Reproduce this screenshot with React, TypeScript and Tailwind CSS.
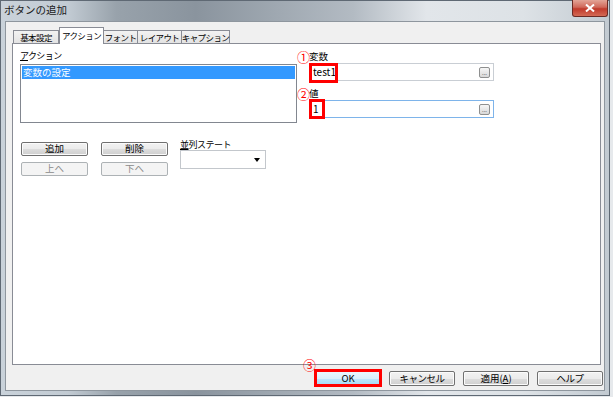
import React from 'react';

const btn =
  'flex items-center justify-center whitespace-nowrap rounded-[2px] border text-[9.5px] leading-none';
const btnNormal =
  btn +
  ' border-[#707070] bg-[linear-gradient(#f2f2f2_0%,#ebebeb_50%,#dddddd_51%,#cfcfcf_100%)] shadow-[inset_0_0_0_1px_#fbfbfb] text-black';
const btnDisabled =
  btn + ' border-[#adb2b5] bg-[#f4f4f4] text-[#8b8b8b]';

function BrowseButton() {
  return (
    <span className="flex h-[11px] w-[11px] items-end justify-center rounded-[2px] border border-[#8e8f8f] bg-[linear-gradient(#f6f6f6,#d8d8d8)] pb-[1px] text-[6px] leading-[6px] text-[#444]">
      ...
    </span>
  );
}

function Tab({ label, active, w }: { label: string; active?: boolean; w: number }) {
  return (
    <div
      className={
        'flex items-center justify-center whitespace-nowrap border-x border-t border-[#898c95] text-[8.5px] leading-none tracking-[-0.6px] ' +
        (active
          ? 'h-[17px] bg-white pb-[2px]'
          : 'mb-[1px] h-[13px] -ml-px bg-[linear-gradient(#f2f2f2,#e3e3e3)] first:ml-0')
      }
      style={{ width: w }}
    >
      {label}
    </div>
  );
}

export default function App() {
  return (
    <div className="h-[397px] w-[613px] overflow-hidden bg-[#e6e9ec] font-['Noto_Sans_CJK_JP','Noto_Sans',sans-serif] text-black">
      <div className="flex h-[396px] w-[610px] flex-col border border-[#5f6974] bg-[linear-gradient(to_right,#c9d2da_0%,#c2cbd3_11%,#98a2ab_19%,#8a949e_32%,#a0a9b2_46%,#b3bbc3_58%,#e2e6ea_70%,#dde2e6_86%,#c2cad1_100%)]">
        {/* title bar */}
        <div className="flex h-[20px] items-start justify-between">
          <span className="pl-[3px] pt-[4px] text-[10.5px] leading-none text-[#1b1b1b]">ボタンの追加</span>
          <div className="-mt-px mr-px flex h-[17px] w-[36px] items-center justify-center rounded-b-[3px] border border-t-0 border-[#6b2a24] bg-[linear-gradient(#e3a497_0%,#d0685a_45%,#c0392b_55%,#d46a55_100%)]">
            <svg width="10" height="8" viewBox="0 0 10 8">
              <path d="M1 0.5 L9 7.5 M9 0.5 L1 7.5" stroke="#fff" strokeWidth="2" />
            </svg>
          </div>
        </div>

        {/* client area */}
        <div className="mx-[4px] flex flex-1 flex-col border border-[#8e969e] bg-[#f0f0f0]">
          {/* tabs */}
          <div className="relative z-10 ml-[7px] mt-[5px] flex h-[17px] items-end">
            <Tab label="基本設定" w={46} />
            <Tab label="アクション" w={45} active />
            <Tab label="フォント" w={35} />
            <Tab label="レイアウト" w={45} />
            <Tab label="キャプション" w={49} />
          </div>

          {/* tab panel */}
          <div className="-mt-px ml-[6px] flex h-[322px] w-[589px] flex-col border border-[#898c95] bg-white pl-[7px] pt-[6px]">
            <div className="flex">
              <div className="w-[277px]">
                <div className="h-[12px] whitespace-nowrap text-[9px] leading-[12px] tracking-[-0.6px]">
                  <span className="underline">ア</span>クション
                </div>
                <div className="mt-[2px] h-[59px] border border-[#828790] p-px">
                  <div className="h-[13px] bg-[#3399ff] pl-[1px] text-[9.5px] leading-[13px] text-white">変数の設定</div>
                </div>
              </div>

              <div className="w-[197px]">
                <div className="flex h-[13px] items-center">
                  <span className="w-[12px] text-[13px] leading-none text-[#ff0000]">①</span>
                  <span className="text-[9.5px] leading-none">変数</span>
                </div>
                <div className="relative ml-[12px] flex h-[18px] w-[185px] items-center justify-between border border-[#c9ced4] pl-[3px] pr-[3px]">
                  <span className="text-[10px] leading-none">test1</span>
                  <BrowseButton />
                  <span className="absolute -left-px -top-px h-[20px] w-[29px] border-[3px] border-[#ff0000]" />
                </div>

                <div className="mt-[6px] flex h-[13px] items-center">
                  <span className="w-[12px] text-[13px] leading-none text-[#ff0000]">②</span>
                  <span className="text-[9.5px] leading-none">値</span>
                </div>
                <div className="relative ml-[12px] flex h-[18px] w-[185px] items-center justify-between border border-[#7eb4ea] pl-[3px] pr-[3px]">
                  <span className="text-[10px] leading-none">1</span>
                  <BrowseButton />
                  <span className="absolute -left-px -top-[2px] h-[20px] w-[16px] border-[3px] border-[#ff0000]" />
                </div>
              </div>
            </div>

            <div className="mt-[17px] flex items-start">
              <div className="ml-px grid grid-cols-[67px_67px] gap-x-[13px] gap-y-[6px] pt-[2px]">
                <div className={btnNormal + ' h-[14px]'}>追加</div>
                <div className={btnNormal + ' h-[14px]'}>削除</div>
                <div className={btnDisabled + ' h-[14px]'}>上へ</div>
                <div className={btnDisabled + ' h-[14px]'}>下へ</div>
              </div>
              <div className="ml-[12px]">
                <div className="h-[10px] whitespace-nowrap text-[9px] leading-[10px] tracking-[-0.5px]">
                  <span className="underline">並</span>列ステート
                </div>
                <div className="flex h-[19px] w-[86px] items-center justify-end border border-[#c3c7cc] bg-white pr-[5px]">
                  <svg width="6" height="4" viewBox="0 0 6 4">
                    <path d="M0 0 H6 L3 4 Z" fill="#000" />
                  </svg>
                </div>
              </div>
            </div>
          </div>

          {/* dialog buttons */}
          <div className="mt-[6px] flex justify-end gap-[8px] pr-[1px]">
            <div className="relative">
              <div className={btn + ' h-[15px] w-[66px] border-[#3c7fb1] bg-[linear-gradient(#eaf6fd_0%,#d9f0fc_50%,#bee6fd_51%,#a7d9f5_100%)]'}>OK</div>
              <span className="absolute -bottom-px -left-px -right-px -top-[2px] border-[3px] border-[#ff0000]" />
              <span className="absolute -left-[12px] -top-[13px] text-[13px] leading-none text-[#ff0000]">③</span>
            </div>
            <div className={btnNormal + ' h-[15px] w-[66px] tracking-[-0.5px]'}>キャンセル</div>
            <div className={btnNormal + ' h-[15px] w-[66px]'}>
              適用(<span className="underline">A</span>)
            </div>
            <div className={btnNormal + ' h-[15px] w-[66px] tracking-[-0.5px]'}>ヘルプ</div>
          </div>
        </div>
        <div className="h-[4px]" />
      </div>
    </div>
  );
}
